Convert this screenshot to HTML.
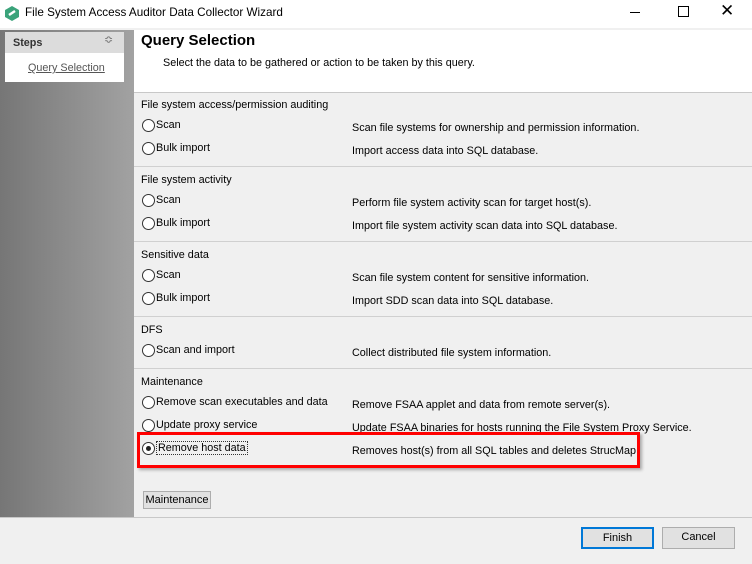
<!DOCTYPE html><html><head><style>
*{margin:0;padding:0;box-sizing:border-box}
body{width:752px;height:564px;background:#f0f0f0;font-family:"Liberation Sans",sans-serif;font-size:10.8px;color:#000;position:relative;overflow:hidden}
.a{position:absolute;white-space:nowrap}
.title{left:0;top:0;width:752px;height:28px;background:#fff}
.left{left:0;top:30px;width:134px;height:487px;background:linear-gradient(to right,#767676,#a2a2a2)}
.head{left:134px;top:30px;width:618px;height:62px;background:#fff}
.sep{position:absolute;left:134px;width:618px;height:1px;background:#d0d0d0}
.r{position:absolute;width:13px;height:13px;border:1px solid #333;border-radius:50%;background:#fff}
.btn{position:absolute;height:21px;border:1px solid #adadad;background:#e1e1e1;text-align:center;line-height:19px;font-size:11px}
</style></head><body>
<div class="a title"></div>
<svg class="a" style="left:5px;top:6px" width="14" height="15" viewBox="0 0 14 15"><polygon points="7,0 14,4 14,11 7,15 0,11 0,4" fill="#3aa37a"/><path d="M4 9 L10 5" stroke="#fff" stroke-width="2.5"/></svg>
<div class="a" style="left:25px;top:6px;font-size:11.7px">File System Access Auditor Data Collector Wizard</div>
<div class="a" style="left:630px;top:12px;width:10px;height:1px;background:#000"></div>
<div class="a" style="left:678px;top:6px;width:11px;height:11px;border:1px solid #000"></div>
<div class="a" style="left:720px;top:1px;font-size:17px">✕</div>
<div class="a left"></div>
<div class="a" style="left:5px;top:32px;width:119px;height:50px;background:#fff"></div>
<div class="a" style="left:5px;top:32px;width:119px;height:21px;background:#dcdcdc"></div>
<div class="a" style="left:13px;top:37px;font-weight:bold;color:#333">Steps</div>
<div class="a" style="left:104px;top:33px;font-size:11px;color:#777">≎</div>
<div class="a" style="left:28px;top:62px;color:#555;text-decoration:underline">Query Selection</div>
<div class="a head"></div>
<div class="a" style="left:141px;top:32px;font-size:15px;font-weight:bold">Query Selection</div>
<div class="a" style="left:163px;top:57px">Select the data to be gathered or action to be taken by this query.</div>
<div class="sep" style="top:92px;background:#c8c8c8"></div>
<div class="sep" style="top:166px"></div><div class="sep" style="top:241px"></div><div class="sep" style="top:316px"></div><div class="sep" style="top:368px"></div>
<div class="a" style="left:141px;top:99px">File system access/permission auditing</div>
<div class="r" style="left:142px;top:119px"></div><div class="a" style="left:156px;top:119px">Scan</div><div class="a" style="left:352px;top:122px">Scan file systems for ownership and permission information.</div>
<div class="r" style="left:142px;top:142px"></div><div class="a" style="left:156px;top:142px">Bulk import</div><div class="a" style="left:352px;top:145px">Import access data into SQL database.</div>
<div class="a" style="left:141px;top:174px">File system activity</div>
<div class="r" style="left:142px;top:194px"></div><div class="a" style="left:156px;top:194px">Scan</div><div class="a" style="left:352px;top:197px">Perform file system activity scan for target host(s).</div>
<div class="r" style="left:142px;top:217px"></div><div class="a" style="left:156px;top:217px">Bulk import</div><div class="a" style="left:352px;top:220px">Import file system activity scan data into SQL database.</div>
<div class="a" style="left:141px;top:249px">Sensitive data</div>
<div class="r" style="left:142px;top:269px"></div><div class="a" style="left:156px;top:269px">Scan</div><div class="a" style="left:352px;top:272px">Scan file system content for sensitive information.</div>
<div class="r" style="left:142px;top:292px"></div><div class="a" style="left:156px;top:292px">Bulk import</div><div class="a" style="left:352px;top:295px">Import SDD scan data into SQL database.</div>
<div class="a" style="left:141px;top:324px">DFS</div>
<div class="r" style="left:142px;top:344px"></div><div class="a" style="left:156px;top:344px">Scan and import</div><div class="a" style="left:352px;top:347px">Collect distributed file system information.</div>
<div class="a" style="left:141px;top:376px">Maintenance</div>
<div class="r" style="left:142px;top:396px"></div><div class="a" style="left:156px;top:396px">Remove scan executables and data</div><div class="a" style="left:352px;top:399px">Remove FSAA applet and data from remote server(s).</div>
<div class="r" style="left:142px;top:419px"></div><div class="a" style="left:156px;top:419px">Update proxy service</div><div class="a" style="left:352px;top:422px">Update FSAA binaries for hosts running the File System Proxy Service.</div>
<div class="r" style="left:142px;top:442px"></div><div class="a" style="left:146px;top:446px;width:5px;height:5px;border-radius:50%;background:#222"></div>
<div class="a" style="left:156px;top:441px;border:1px dotted #333;padding:0 1px">Remove host data</div><div class="a" style="left:352px;top:445px">Removes host(s) from all SQL tables and deletes StrucMap.</div>
<div class="a" style="left:137px;top:432px;width:503px;height:36px;border:3px solid #f00;box-shadow:2px 2px 3px rgba(0,0,0,.3)"></div>
<div class="btn" style="left:143px;top:491px;width:68px;height:18px;line-height:16px">Maintenance</div>
<div class="a" style="left:0;top:517px;width:752px;height:1px;background:#c8c8c8"></div>
<div class="btn" style="left:581px;top:527px;width:73px;height:22px;border:2px solid #0078d7">Finish</div>
<div class="btn" style="left:662px;top:527px;width:73px;height:22px">Cancel</div>
</body></html>
